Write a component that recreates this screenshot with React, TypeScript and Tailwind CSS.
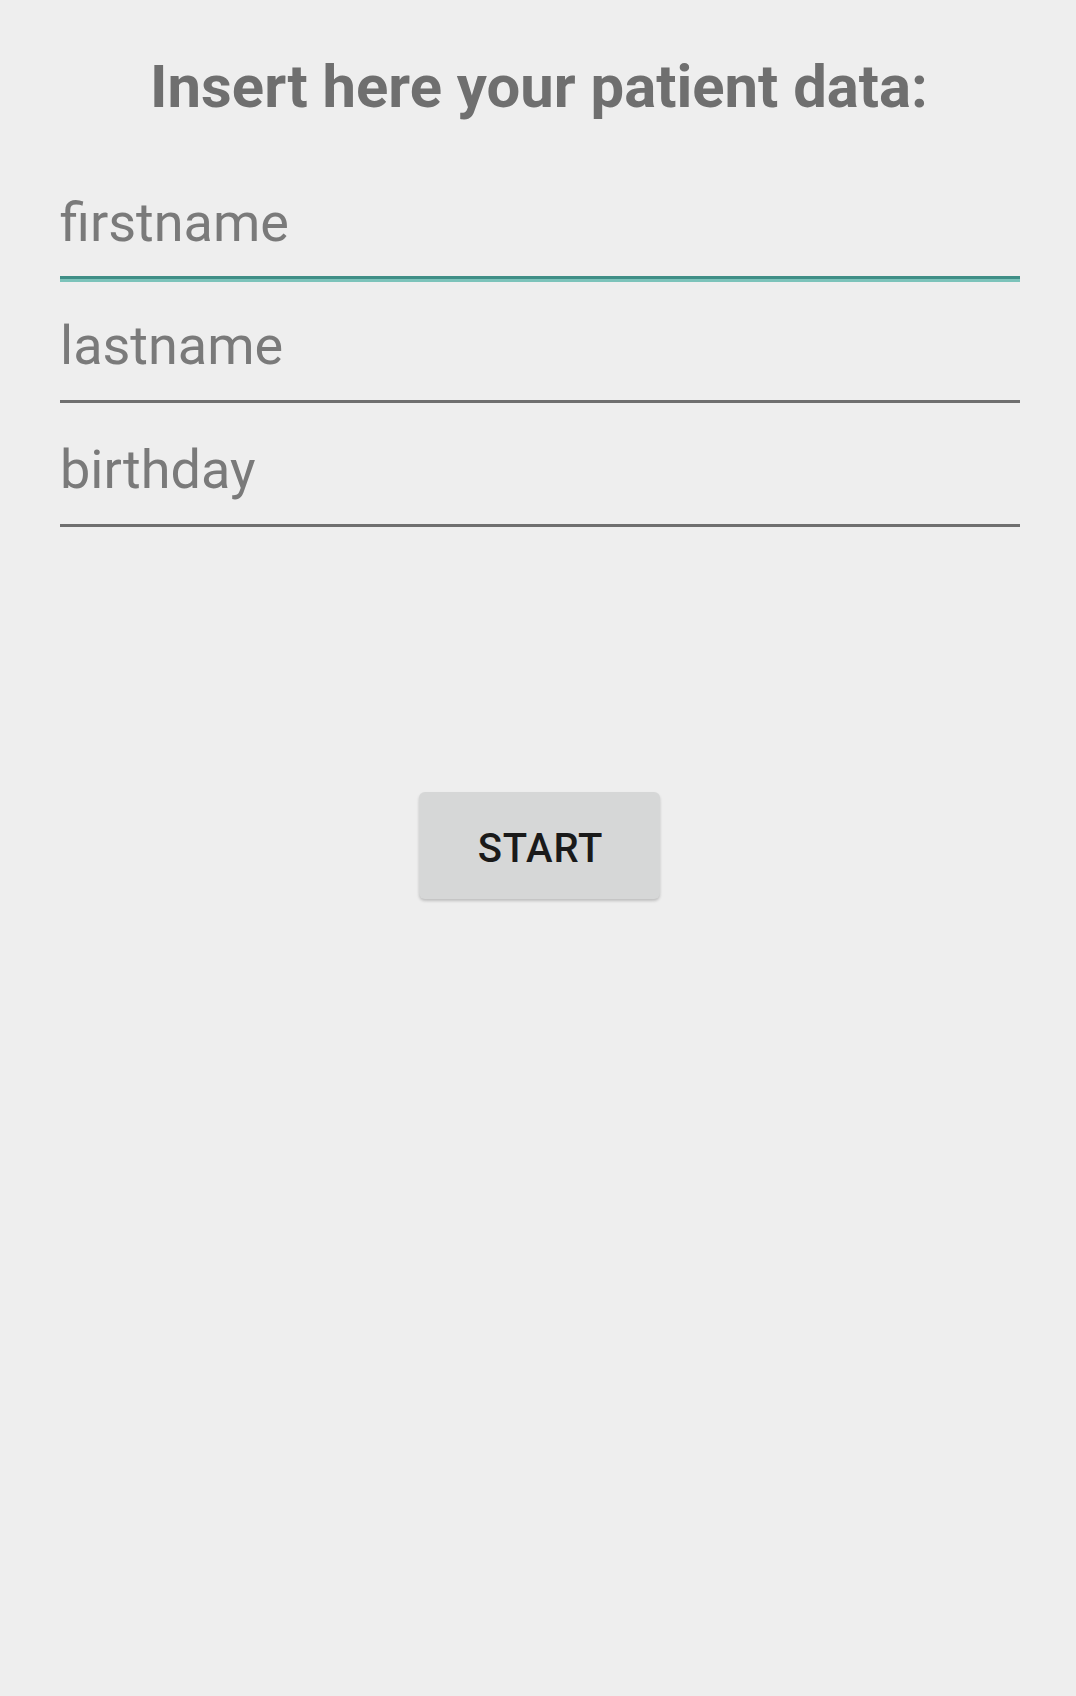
import React from "react";

const fields = [
  { name: "firstname", focused: true },
  { name: "lastname", focused: false },
  { name: "birthday", focused: false },
];

const Field: React.FC<{ name: string; focused: boolean }> = ({ name, focused }) => {
  return (
    <div className="flex flex-col">
      <input
        placeholder={name}
        className="h-[64px] bg-transparent text-[54px] leading-[64px] text-[#7a7a7a] placeholder:text-[#7a7a7a] outline-none"
      />
      {focused ? (
        <div className="mt-[21px] mb-[32px] flex flex-col">
          <div className="h-[3px] bg-[#3f8e86]" />
          <div className="h-[3px] bg-[#7cc3ba]" />
        </div>
      ) : (
        <div className="mt-[22px] mb-[35px] h-[3px] bg-[#6f6f6f]" />
      )}
    </div>
  );
};

export default function App() {
  return (
    <div className="min-h-[1696px] w-full bg-[#eeeeee] font-['Roboto',sans-serif]">
      <div className="flex flex-col items-center pt-[52px] pl-[2px]">
        <h1 className="text-[59.8px] font-bold leading-[70px] text-[#6f6f6f]">
          Insert here your patient data:
        </h1>
      </div>
      <div className="ml-[60px] mr-[56px] mt-[69px] flex flex-col">
        {fields.map((f) => (
          <Field key={f.name} name={f.name} focused={f.focused} />
        ))}
      </div>
      <div className="mt-[230px] flex justify-center pl-[3px]">
        <button className="h-[107px] w-[241px] rounded-[6px] bg-[#d6d7d7] pt-[6px] pl-[2px] text-[40px] font-medium tracking-[0.02em] text-[#1a1a1a] shadow-[0_2px_3px_rgba(0,0,0,0.2)]">
          START
        </button>
      </div>
    </div>
  );
}
